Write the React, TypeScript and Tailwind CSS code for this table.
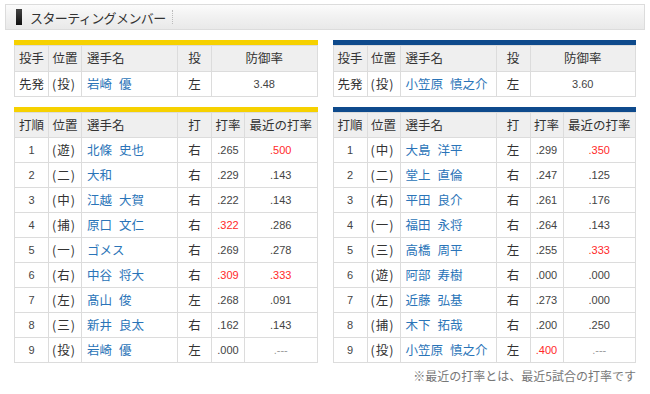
import React from 'react';

type Batter = {
  order: number;
  pos: string;
  name: string;
  hand: string;
  avg: string;
  recent: string;
  avgHot?: boolean;
  recentHot?: boolean;
};

const tigersPitcher = { name: '岩崎 優', hand: '左', era: '3.48' };
const dragonsPitcher = { name: '小笠原 慎之介', hand: '左', era: '3.60' };

const tigers: Batter[] = [
  { order: 1, pos: '遊', name: '北條 史也', hand: '右', avg: '.265', recent: '.500', recentHot: true },
  { order: 2, pos: '二', name: '大和', hand: '右', avg: '.229', recent: '.143' },
  { order: 3, pos: '中', name: '江越 大賀', hand: '右', avg: '.222', recent: '.143' },
  { order: 4, pos: '捕', name: '原口 文仁', hand: '右', avg: '.322', recent: '.286', avgHot: true },
  { order: 5, pos: '一', name: 'ゴメス', hand: '右', avg: '.269', recent: '.278' },
  { order: 6, pos: '右', name: '中谷 将大', hand: '右', avg: '.309', recent: '.333', avgHot: true, recentHot: true },
  { order: 7, pos: '左', name: '髙山 俊', hand: '左', avg: '.268', recent: '.091' },
  { order: 8, pos: '三', name: '新井 良太', hand: '右', avg: '.162', recent: '.143' },
  { order: 9, pos: '投', name: '岩崎 優', hand: '左', avg: '.000', recent: '.---' },
];

const dragons: Batter[] = [
  { order: 1, pos: '中', name: '大島 洋平', hand: '左', avg: '.299', recent: '.350', recentHot: true },
  { order: 2, pos: '二', name: '堂上 直倫', hand: '右', avg: '.247', recent: '.125' },
  { order: 3, pos: '右', name: '平田 良介', hand: '右', avg: '.261', recent: '.176' },
  { order: 4, pos: '一', name: '福田 永将', hand: '右', avg: '.264', recent: '.143' },
  { order: 5, pos: '三', name: '高橋 周平', hand: '左', avg: '.255', recent: '.333', recentHot: true },
  { order: 6, pos: '遊', name: '阿部 寿樹', hand: '右', avg: '.000', recent: '.000' },
  { order: 7, pos: '左', name: '近藤 弘基', hand: '右', avg: '.273', recent: '.000' },
  { order: 8, pos: '捕', name: '木下 拓哉', hand: '右', avg: '.200', recent: '.250' },
  { order: 9, pos: '投', name: '小笠原 慎之介', hand: '左', avg: '.400', recent: '.---', avgHot: true },
];

const th = 'border border-[#dcdcdc] bg-[#efefef] font-normal text-[#333] p-0';
const td = 'border border-[#dcdcdc] bg-white text-[#333] p-0';
const num = "font-['Liberation_Sans',sans-serif] text-[11px] text-[#444]";

function Name({ name }: { name: string }) {
  const [last, first] = name.split(' ');
  return (
    <span className="text-[#2a74b8]">
      {last}
      {first && <span className="inline-block w-[7px]" />}
      {first}
    </span>
  );
}

function Pos({ pos }: { pos: string }) {
  return (
    <span className="pl-[3px] tracking-[1px]">
      ({pos})
    </span>
  );
}

function PitcherTable({ bar, p }: { bar: string; p: typeof tigersPitcher }) {
  return (
    <div>
      <div className={`h-[5px] ${bar}`} />
      <table className="w-full table-fixed border-collapse">
        <colgroup>
          <col className="w-[34px]" />
          <col className="w-[33px]" />
          <col className="w-[96px]" />
          <col className="w-[34px]" />
          <col />
        </colgroup>
        <thead>
          <tr className="h-[26px]">
            <th className={`${th} text-center`}>投手</th>
            <th className={`${th} text-center`}>位置</th>
            <th className={`${th} text-left pl-[5px]`}>選手名</th>
            <th className={`${th} text-center`}>投</th>
            <th className={`${th} text-center`}>防御率</th>
          </tr>
        </thead>
        <tbody>
          <tr className="h-[25px]">
            <td className={`${td} text-center`}>先発</td>
            <td className={`${td} text-left`}>
              <Pos pos="投" />
            </td>
            <td className={`${td} pl-[5px] whitespace-nowrap`}>
              <Name name={p.name} />
            </td>
            <td className={`${td} text-center`}>{p.hand}</td>
            <td className={`${td} text-center ${num}`}>{p.era}</td>
          </tr>
        </tbody>
      </table>
    </div>
  );
}

function LineupTable({ bar, rows }: { bar: string; rows: Batter[] }) {
  return (
    <div>
      <div className={`h-[5px] ${bar}`} />
      <table className="w-full table-fixed border-collapse">
        <colgroup>
          <col className="w-[34px]" />
          <col className="w-[33px]" />
          <col className="w-[96px]" />
          <col className="w-[34px]" />
          <col className="w-[33px]" />
          <col />
        </colgroup>
        <thead>
          <tr className="h-[25px]">
            <th className={`${th} text-center`}>打順</th>
            <th className={`${th} text-center`}>位置</th>
            <th className={`${th} text-left pl-[5px]`}>選手名</th>
            <th className={`${th} text-center`}>打</th>
            <th className={`${th} text-center`}>打率</th>
            <th className={`${th} text-center whitespace-nowrap`}>最近の打率</th>
          </tr>
        </thead>
        <tbody>
          {rows.map((r) => (
            <tr key={r.order} className="h-[25px]">
              <td className={`${td} text-center ${num}`}>{r.order}</td>
              <td className={`${td} text-left`}>
                <Pos pos={r.pos} />
              </td>
              <td className={`${td} pl-[5px] whitespace-nowrap`}>
                <Name name={r.name} />
              </td>
              <td className={`${td} text-center`}>{r.hand}</td>
              <td className={`${td} text-center ${num} ${r.avgHot ? 'text-[#ff2a2a]' : ''}`}>{r.avg}</td>
              <td
                className={`${td} text-center ${num} ${r.recentHot ? 'text-[#ff2a2a]' : ''} ${
                  r.recent === '.---' ? 'text-[#999]' : ''
                }`}
              >
                {r.recent}
              </td>
            </tr>
          ))}
        </tbody>
      </table>
    </div>
  );
}

export default function App() {
  return (
    <div className="w-[650px] h-[394px] bg-white font-['Noto_Sans_CJK_JP',sans-serif] text-[12.5px] leading-none text-[#333] pt-[4px]">
      <div className="mx-[5px] h-[26px] border border-[#dcdcdc] bg-gradient-to-b from-[#fbfbfb] via-[#f1f1f1] to-[#e9e9e9] flex items-center pl-[10px]">
        <div className="w-[6px] h-[16px] bg-gradient-to-b from-[#444] to-[#111]" />
        <span className="ml-[8px] text-[13px] tracking-[-0.6px] text-[#333]">スターティングメンバー</span>
        <div className="ml-[6px] h-[14px] border-l border-dotted border-[#bbb]" />
      </div>

      <div className="mx-[14px] mt-[10px] grid grid-cols-2 gap-x-[15px]">
        <div className="flex flex-col gap-[10px]">
          <PitcherTable bar="bg-[#f6d100]" p={tigersPitcher} />
          <LineupTable bar="bg-[#f6d100]" rows={tigers} />
        </div>
        <div className="flex flex-col gap-[10px]">
          <PitcherTable bar="bg-[#0e4a8c]" p={dragonsPitcher} />
          <LineupTable bar="bg-[#0e4a8c]" rows={dragons} />
          <p className="-mt-[3px] text-right text-[12px] text-[#777]">※最近の打率とは、最近5試合の打率です</p>
        </div>
      </div>
    </div>
  );
}
